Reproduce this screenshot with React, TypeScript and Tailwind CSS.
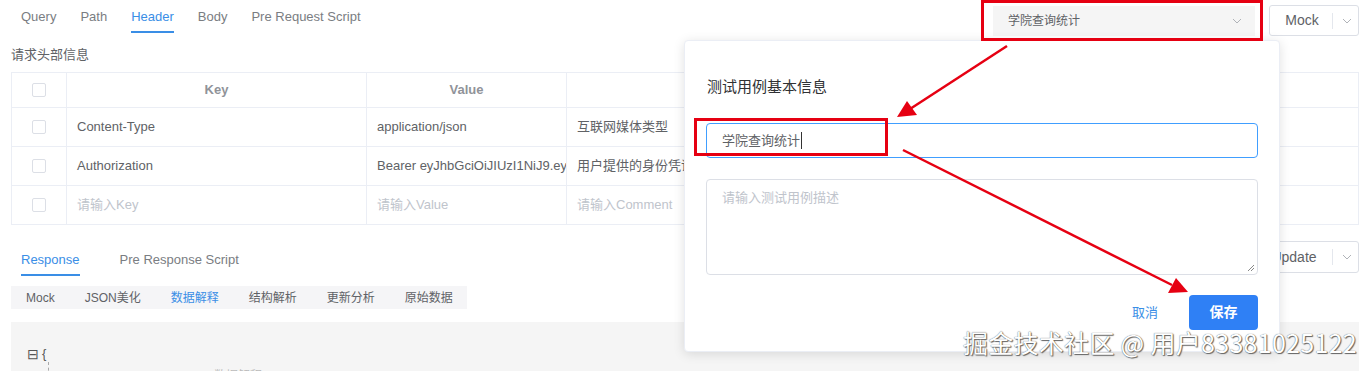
function Checkbox() {
  return <span className="block w-[14px] h-[14px] rounded-[2px] border border-[#dcdfe6] bg-white" />;
}

function Chevron({ className }: { className?: string }) {
  return (
    <svg className={className} width="12" height="12" viewBox="0 0 12 12" fill="none">
      <path d="M2 4l4 4 4-4" stroke="#b0b3b8" strokeWidth="1" />
    </svg>
  );
}

function App(): JSX.Element {
  const rows = [
    { k: "Content-Type", v: "application/json", c: "互联网媒体类型", ph: false },
    { k: "Authorization", v: "Bearer eyJhbGciOiJIUzI1NiJ9.ey", c: "用户提供的身份凭证", ph: false },
    { k: "请输入Key", v: "请输入Value", c: "请输入Comment", ph: true },
  ];
  const subTabs = ["Mock", "JSON美化", "数据解释", "结构解析", "更新分析", "原始数据"];

  return (
    <div className="relative w-[1370px] h-[371px] overflow-hidden bg-white text-[#606266] font-['Liberation_Sans','Noto_Sans_CJK_SC',sans-serif]">
      {/* top bar */}
      <div className="flex items-start justify-between pl-[21px] pr-[11px]">
        <div className="flex gap-6 text-[13px]">
          {["Query", "Path", "Header", "Body", "Pre Request Script"].map((t) => (
            <div
              key={t}
              className={
                t === "Header"
                  ? "h-[33px] pt-[7px] text-[#3a8ee6] border-b-2 border-[#3a8ee6]"
                  : "h-[33px] pt-[7px] text-[#7a7d82]"
              }
            >
              {t}
            </div>
          ))}
        </div>
        <div className="flex items-start gap-[14px] pt-[5px]">
          <div className="mt-[1px] w-[262px] h-[30px] bg-[#f5f5f5] flex items-center justify-between pl-[15px] pr-[12px] text-[12px] text-[#606266]">
            学院查询统计
            <Chevron />
          </div>
          <div className="w-[90px] h-[31px] rounded-[3px] border border-[#dcdfe6] flex items-center text-[14px]">
            <span className="w-[62px] text-center pl-[2px]">Mock</span>
            <span className="w-px h-[16px] bg-[#e4e7ed]" />
            <Chevron className="ml-[8px]" />
          </div>
        </div>
      </div>

      <div className="pl-[11px] mt-[10px] text-[13px] leading-[18px] text-[#606266]">请求头部信息</div>

      {/* header table */}
      <div className="ml-[11px] mt-[8px] w-[1348px] border border-[#ebeef5] text-[13px]">
        <div className="grid grid-cols-[55px_300px_200px_1fr] h-[34px] font-bold text-[#909399]">
          <div className="flex items-center justify-center border-r border-[#ebeef5]"><Checkbox /></div>
          <div className="flex items-center justify-center border-r border-[#ebeef5]">Key</div>
          <div className="flex items-center justify-center border-r border-[#ebeef5]">Value</div>
          <div className="flex items-center justify-center">Comment</div>
        </div>
        {rows.map((r) => (
          <div
            key={r.k}
            className={
              r.ph
                ? "grid grid-cols-[55px_300px_200px_1fr] h-[39px] border-t border-[#ebeef5] text-[#c0c4cc]"
                : "grid grid-cols-[55px_300px_200px_1fr] h-[39px] border-t border-[#ebeef5] text-[#606266]"
            }
          >
            <div className="flex items-center justify-center border-r border-[#ebeef5]"><Checkbox /></div>
            <div className="flex items-center pl-[10px] border-r border-[#ebeef5]">{r.k}</div>
            <div className="flex items-center pl-[10px] border-r border-[#ebeef5] whitespace-nowrap overflow-hidden">{r.v}</div>
            <div className="flex items-center pl-[10px]">{r.c}</div>
          </div>
        ))}
      </div>

      {/* response tabs */}
      <div className="flex items-start justify-between pl-[21px] pr-[11px] mt-[18px]">
        <div className="flex gap-10 text-[13px]">
          <div className="h-[33px] pt-[7px] text-[#3a8ee6] border-b-2 border-[#3a8ee6]">Response</div>
          <div className="h-[33px] pt-[7px] text-[#7a7d82]">Pre Response Script</div>
        </div>
        <div className="-mt-[2px] w-[104px] h-[32px] rounded-[3px] border border-[#dcdfe6] flex items-center text-[14px]">
          <span className="w-[76px] text-center">Update</span>
          <span className="w-px h-[16px] bg-[#e4e7ed]" />
          <Chevron className="ml-[8px]" />
        </div>
      </div>

      <div className="ml-[11px] mt-[10px] w-[456px] h-[23px] bg-[#f5f5f7] flex items-center pl-[15px] gap-[30px] text-[12px] text-[#606266]">
        {subTabs.map((t) => (
          <span key={t} className={t === "数据解释" ? "text-[#3a8ee6]" : ""}>{t}</span>
        ))}
      </div>

      <div className="ml-[11px] mt-[13px] w-[1348px] h-[60px] bg-[#f5f5f5] pl-[16px] pt-[24px] text-[13px] text-[#555]">
        <div className="flex items-center gap-[3px] h-[16px]">
          <span className="text-[14px]">⊟</span>
          <span>{"{"}</span>
        </div>
        <div className="flex h-[20px]">
          <span className="ml-[21px] w-0 h-full border-l border-dashed border-[#aaa]" />
          <span className="ml-[165px] mt-[7px] text-[#bbb] text-[12px] leading-[14px]">数据解释</span>
        </div>
      </div>

      {/* popover */}
      <div className="absolute left-[684px] top-[40px] w-[596px] h-[312px] bg-white rounded-[4px] border border-[#ebeef5] shadow-[0_2px_12px_rgba(0,0,0,0.12)] pt-[35px] px-[21px]">
        <div className="text-[15px] leading-[22px] text-[#303133] pl-px">测试用例基本信息</div>
        <div className="mt-[25px] h-[35px] rounded-[4px] border border-[#409eff] flex items-center pl-[15px] text-[13px] text-[#606266]">
          学院查询统计
          <span className="ml-[1px] w-px h-[17px] bg-[#333]" />
        </div>
        <div className="relative mt-[21px] h-[96px] rounded-[4px] border border-[#dcdfe6] pl-[15px] pt-[8px] text-[13px] text-[#c0c4cc]">
          请输入测试用例描述
          <svg className="absolute right-[2px] bottom-[2px]" width="8" height="8" viewBox="0 0 8 8">
            <path d="M7 1L1 7M7 4L4 7" stroke="#888" strokeWidth="1" />
          </svg>
        </div>
        <div className="mt-[20px] flex items-center justify-end gap-[31px]">
          <span className="text-[13px] text-[#3a8ee6]">取消</span>
          <span className="w-[69px] h-[35px] rounded-[4px] bg-[#2f80f5] text-white text-[14px] font-bold flex items-center justify-center">
            保存
          </span>
        </div>
      </div>

      {/* annotations */}
      <div className="absolute left-[981px] top-0 w-[282px] h-[41px] border-[3px] border-[#e60012]" />
      <div className="absolute left-[694px] top-[118px] w-[194px] h-[38px] border-[3px] border-[#e60012]" />
      <svg className="absolute inset-0 pointer-events-none" width="1370" height="371">
        <line x1="1007" y1="46" x2="910" y2="109" stroke="#e60012" strokeWidth="2.5" />
        <polygon points="897,117 907,101 917,115" fill="#e60012" />
        <line x1="903" y1="150" x2="1172" y2="285" stroke="#e60012" strokeWidth="2.5" />
        <polygon points="1188,292 1168,293 1176,278" fill="#e60012" />
      </svg>

      <div className="absolute right-[13px] top-[326px] text-[25px] leading-[32px] tracking-[0.3px] text-white font-['Noto_Sans_CJK_SC',sans-serif] [text-shadow:0_0_1px_#444,1px_1px_1px_#666] whitespace-nowrap">
        掘金技术社区 @ 用户83381025122
      </div>
    </div>
  );
}

export default App;
